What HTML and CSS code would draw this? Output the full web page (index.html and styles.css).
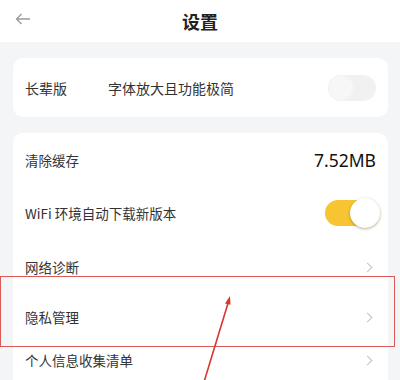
FILE: index.html
```html
<html>
    <head>
        <meta charset="utf-8">
        <link rel="stylesheet" href="styles.css">
    </head>
    <body>
        <div class="topbar">
            <svg class="back" width="16" height="12" viewBox="0 0 16 12">
                <path d="M15 6H1.5M6.5 1L1.5 6l5 5" fill="none" stroke="#9a9a9a" stroke-width="1.3"/>
            </svg>
            <div class="title">设置</div>
        </div>

        <div class="card card-elder">
            <div class="row">
                <span class="label">长辈版</span>
                <span class="desc">字体放大且功能极简</span>
                <span class="switch"><span class="knob"></span></span>
            </div>
        </div>

        <div class="card card-list">
            <div class="row">
                <span class="label">清除缓存</span>
                <span class="size">7.52MB</span>
            </div>
            <div class="row">
                <span class="label">WiFi 环境自动下载新版本</span>
                <span class="switch on"><span class="knob"></span></span>
            </div>
            <div class="row">
                <span class="label">网络诊断</span>
                <span class="chev"></span>
            </div>
            <div class="row">
                <span class="label">隐私管理</span>
                <span class="chev"></span>
            </div>
            <div class="row">
                <span class="label">个人信息收集清单</span>
                <span class="chev"></span>
            </div>
        </div>

        <!-- annotation drawn over the screenshot -->
        <div class="mark"></div>
        <svg class="arrow" width="400" height="380" viewBox="0 0 400 380">
            <path d="M204 382L229 300" stroke="#d8352e" stroke-width="1.6" fill="none"/>
            <path d="M230 296l-5 7.5 5.5 1.2z" fill="#d8352e"/>
        </svg>
    </body>
</html>
```

FILE: styles.css
```css
body{
    margin: 0;
    background: #f4f5f7;
    font-family: "Noto Sans CJK SC", "Noto Sans", sans-serif;
    color: #333;
    width: 400px;
    height: 380px;
    overflow: hidden;
}
.topbar
{
    height: 42px;
    background: #fff;
    display: flex;
    align-items: center;
    justify-content: center;
    position: relative;
}
.back
{
    position: absolute;
    left: 15px;
    top: 13px;
}
.title
{
    font-size: 18px;
    font-weight: bold;
    color: #222;
}
.card
{
    background: #fff;
    margin: 0 12px 0 13px;
    border-radius: 10px;
}
.card-elder
{
    margin-top: 16px;
    height: 59px;
    display: flex;
    align-items: center;
}
.card-list
{
    margin-top: 16px;
    padding-top: 1px;
    border-radius: 10px 10px 0 0;
}
.row
{
    display: flex;
    align-items: center;
    padding: 0 12px 0 12px;
    height: 50px;
    width: 100%;
    box-sizing: border-box;
}
.card-list .row:nth-child(1){ height: 52px; }
.card-list .row:nth-child(2){ height: 54px; }
.card-list .row:nth-child(3){ height: 54px; }
.card-list .row:nth-child(4){ height: 46px; }
.card-list .row:nth-child(5){ height: 40px; }
.label
{
    font-size: 13.5px;
    color: #333;
    flex: 1;
}
.card-elder .label
{
    flex: none;
    width: 83px;
    font-size: 14px;
}
.desc
{
    flex: 1;
    font-size: 14px;
    color: #333;
}
.size
{
    font-family: "Noto Sans", sans-serif;
    font-size: 17.5px;
    color: #111;
}
.switch
{
    width: 48px;
    height: 26px;
    border-radius: 13px;
    background: #f1f1f1;
    position: relative;
}
.switch .knob
{
    position: absolute;
    left: 1px;
    top: 1px;
    width: 24px;
    height: 24px;
    border-radius: 50%;
    background: #f7f7f7;
}
.switch.on
{
    width: 54px;
    height: 26px;
    background: #f7c531;
    margin-right: -3px;
}
.switch.on .knob
{
    left: auto;
    right: -1px;
    top: -2px;
    width: 30px;
    height: 30px;
    background: #fff;
    box-shadow: 0 1px 3px rgba(90, 80, 20, 0.45);
}
.chev
{
    width: 6px;
    height: 6px;
    border-top: 1.3px solid #c2c2c2;
    border-right: 1.3px solid #c2c2c2;
    transform: rotate(45deg);
    margin-right: 5px;
}
.mark
{
    position: absolute;
    left: 0;
    top: 276px;
    width: 393px;
    height: 69px;
    border: 1.5px solid #dc5a55;
}
.arrow
{
    position: absolute;
    left: 0;
    top: 0;
}
```
